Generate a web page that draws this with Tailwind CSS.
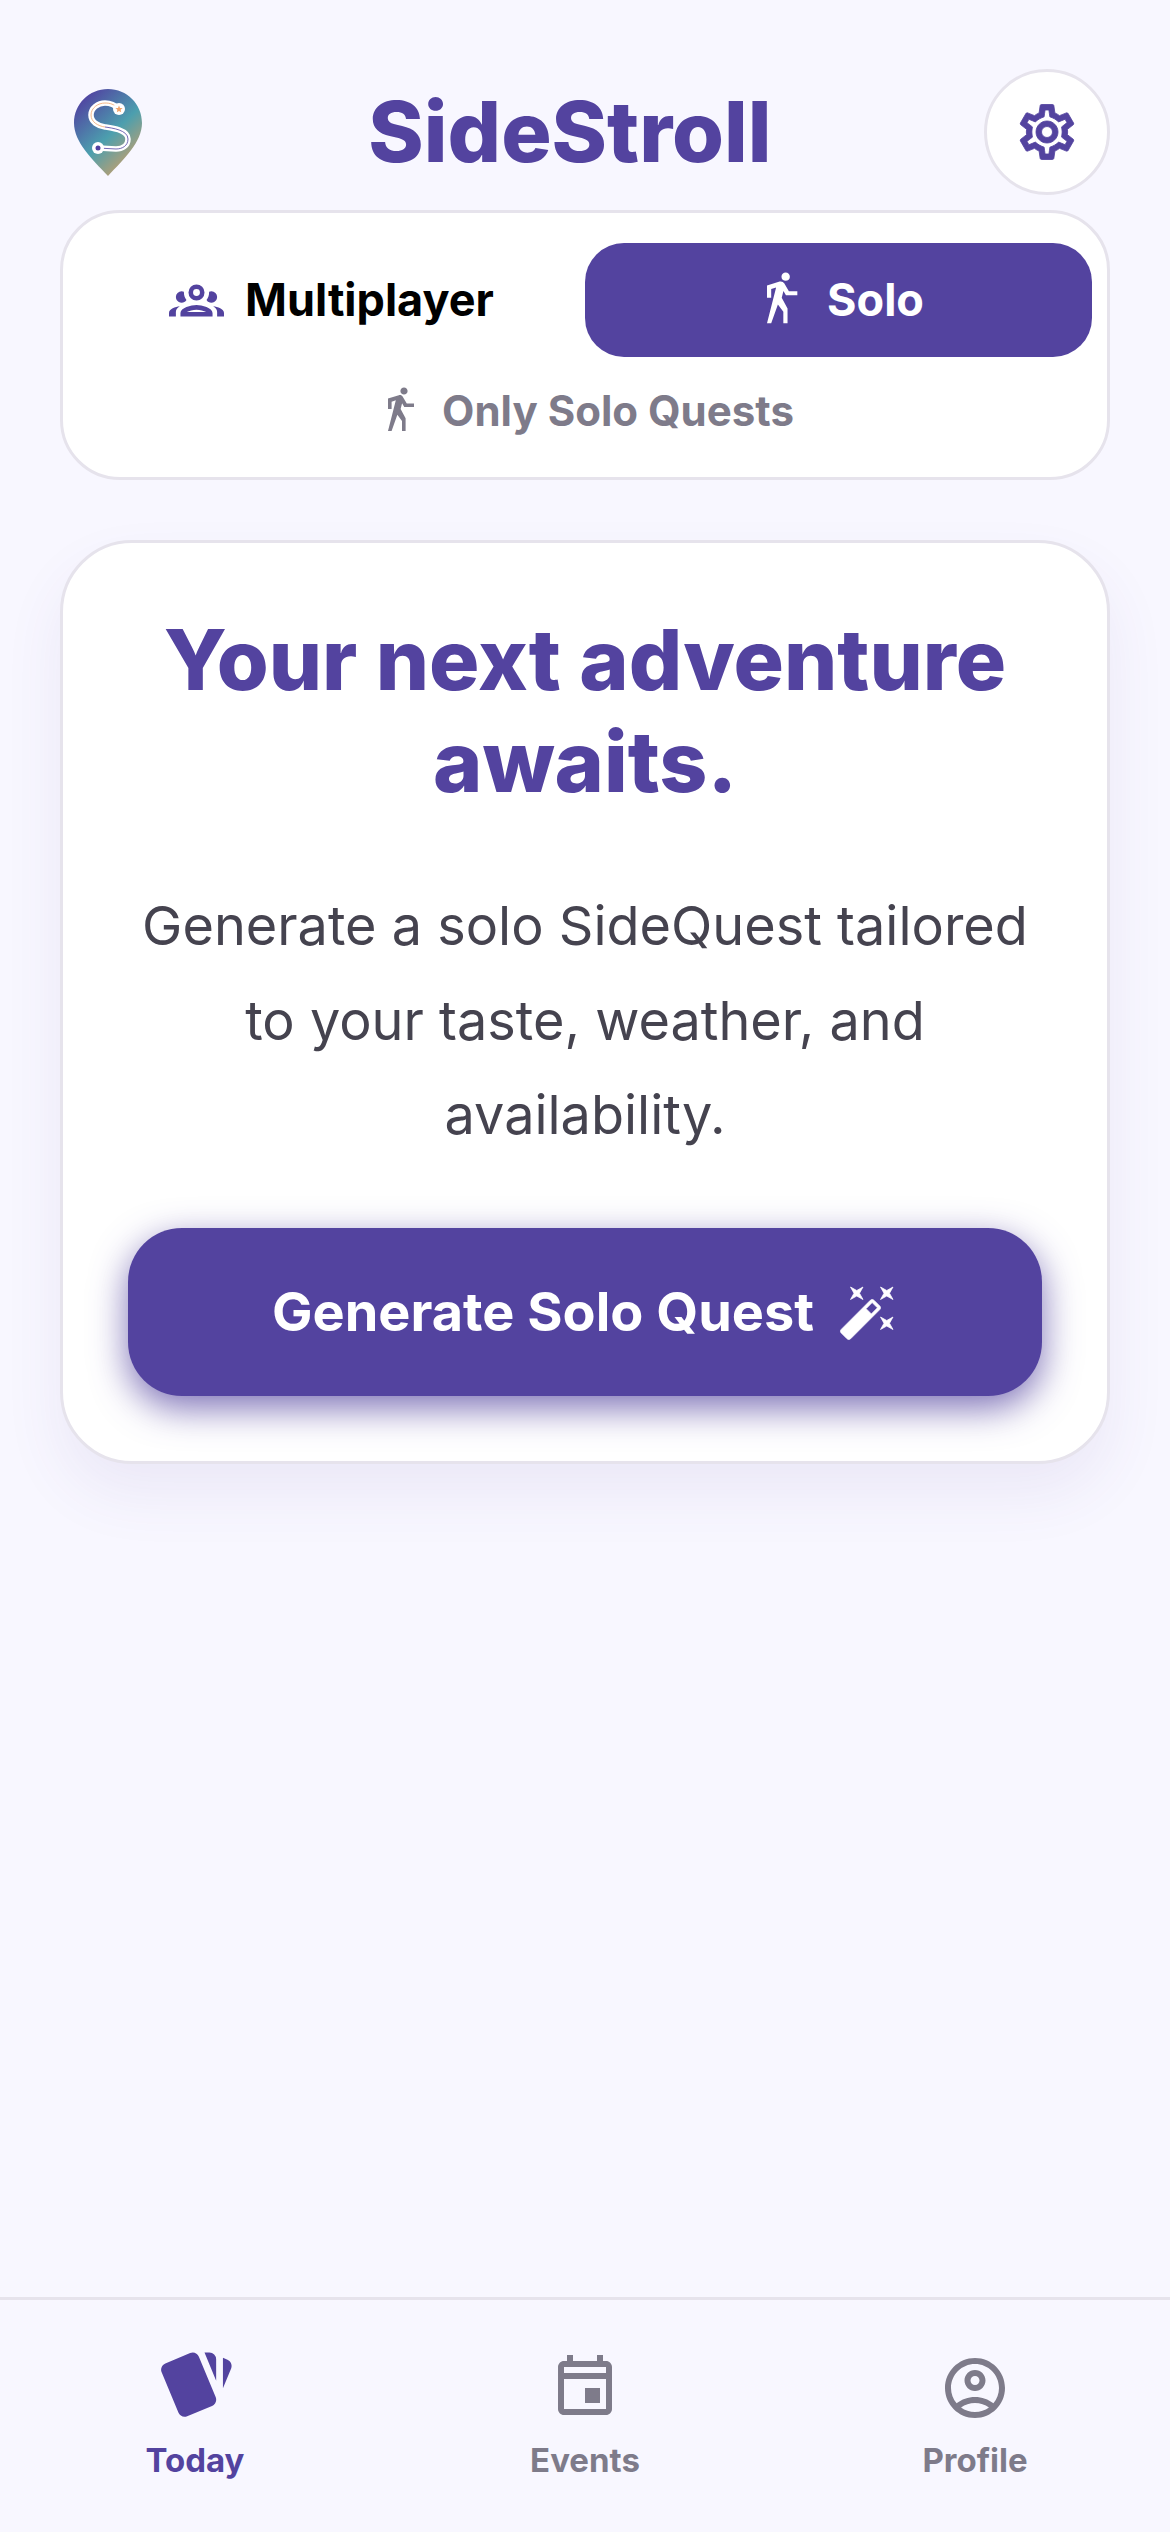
<!DOCTYPE html>
<html lang="en">
<head>
    <meta charset="UTF-8">
    <meta name="viewport" content="width=device-width, initial-scale=1.0">
    <title>SideStroll</title>
    <script src="https://cdn.jsdelivr.net/npm/@tailwindcss/browser@4"></script>
</head>
<body class="bg-[#f8f7ff] font-[Inter,sans-serif]">
    <div class="h-[2532px] flex flex-col overflow-hidden">
        <main class="flex-1 px-[60px] pt-[69px]">
            <!-- header -->
            <div class="flex items-center justify-between h-[126px]">
                <div class="w-[96px] flex justify-center">
                    <svg class="w-[68px] h-[87px]" viewBox="0 0 68 87">
                        <defs>
                            <linearGradient id="pin" x1="0.15" y1="0.05" x2="0.8" y2="0.95">
                                <stop offset="0" stop-color="#5140a1"/>
                                <stop offset="0.55" stop-color="#4c9fae"/>
                                <stop offset="1" stop-color="#cc9f68"/>
                            </linearGradient>
                        </defs>
                        <path d="M34 0C15 0 0 15 0 34C0 53 18 70 34 87C50 70 68 53 68 34C68 15 53 0 34 0Z" fill="url(#pin)"/>
                        <path d="M45 20C40 15 36 14 31 14C24 14 17 19 17 26C17 33 24 37 31 38C38 39 54 41 54 50C54 57 48 60 42 60L24 59" fill="none" stroke="#fff" stroke-width="5.5" stroke-linecap="round"/>
                        <path d="M45 20C40 15 36 14 31 14C24 14 17 19 17 26C17 33 24 37 31 38" fill="none" stroke="#f2a46a" stroke-width="0.8"/>
                        <path d="M31 38C38 39 54 41 54 50C54 57 48 60 42 60L24 59" fill="none" stroke="#5140a1" stroke-width="0.8"/>
                        <circle cx="45" cy="20" r="6" fill="#fff"/>
                        <circle cx="24" cy="59" r="6" fill="#fff"/>
                        <path d="M45 16.5l1 2.400 2.600.2-2 1.700.6 2.500-2.200-1.300-2.200 1.300.6-2.500-2-1.700 2.600-.2z" fill="#f2a46a"/>
                        <circle cx="24" cy="59" r="2.500" fill="#5140a1"/>
                    </svg>
                </div>
                <h1 class="text-[84px] leading-[100px] font-extrabold text-[#53439f]">SideStroll</h1>
                <button class="w-[126px] h-[126px] rounded-full bg-white border-[3px] border-[#e6e3ec] flex items-center justify-center">
                    <svg class="w-[66px] h-[66px] text-[#53439f]" viewBox="0 0 24 24" fill="currentColor" stroke="currentColor" stroke-width="0.3">
                        <path d="M19.43 12.98c.04-.32.07-.64.07-.98 0-.34-.03-.66-.07-.98l2.11-1.65c.19-.15.24-.42.12-.64l-2-3.460c-.09-.16-.26-.25-.44-.25-.06 0-.12.01-.17.03l-2.490 1c-.52-.4-1.080-.73-1.690-.98l-.38-2.650C14.460 2.180 14.250 2 14 2h-4c-.25 0-.46.18-.49.42l-.38 2.650c-.61.25-1.170.59-1.690.98l-2.490-1c-.06-.02-.12-.03-.18-.03-.17 0-.34.09-.43.25l-2 3.460c-.13.22-.07.49.12.64l2.110 1.650c-.04.32-.07.65-.07.98 0 .33.03.66.07.98l-2.110 1.650c-.19.15-.24.42-.12.64l2 3.460c.09.16.26.25.44.25.06 0 .12-.01.17-.03l2.490-1c.52.4 1.080.73 1.690.98l.38 2.650c.03.24.24.42.49.42h4c.25 0 .46-.18.49-.42l.38-2.650c.61-.25 1.170-.59 1.690-.98l2.490 1c.06.02.12.03.18.03.17 0 .34-.09.43-.25l2-3.460c.12-.22.07-.49-.12-.64l-2.110-1.650zm-1.980-1.710c.04.31.05.52.05.73 0 .21-.02.43-.05.73l-.14 1.130.89.7 1.080.84-.7 1.210-1.270-.51-1.040-.42-.9.68c-.43.32-.84.56-1.250.73l-1.060.43-.16 1.130-.2 1.350h-1.400l-.19-1.350-.16-1.130-1.060-.43c-.43-.18-.83-.41-1.230-.71l-.91-.7-1.060.43-1.270.51-.7-1.210 1.080-.84.89-.7-.14-1.130c-.03-.31-.05-.54-.05-.74s.02-.43.05-.73l.14-1.130-.89-.7-1.080-.84.7-1.210 1.270.51 1.040.42.9-.68c.43-.32.84-.56 1.250-.73l1.060-.43.16-1.130.2-1.350h1.390l.19 1.350.16 1.130 1.060.43c.43.18.83.41 1.230.71l.91.7 1.060-.43 1.270-.51.7 1.210-1.070.85-.89.7.14 1.130zM12 8c-2.210 0-4 1.790-4 4s1.790 4 4 4 4-1.790 4-4-1.790-4-4-4zm0 6c-1.100 0-2-.9-2-2s.9-2 2-2 2 .9 2 2-.9 2-2 2z"/>
                    </svg>
                </button>
            </div>

            <!-- mode switch -->
            <section class="mt-[15px] h-[270px] bg-white border-[3px] border-[#e6e3ec] rounded-[60px] px-[15px] pt-[30px]">
                <div class="flex">
                    <button class="flex-1 h-[114px] rounded-[39px] flex items-center justify-center gap-[21px] text-[45px] font-bold text-black">
                        <svg class="w-[55px] h-[55px] text-[#53439f]" viewBox="0 0 24 24" fill="currentColor">
                            <path d="M12,5A3.500,3.500 0 0,0 8.500,8.500A3.500,3.500 0 0,0 12,12A3.500,3.500 0 0,0 15.500,8.500A3.500,3.500 0 0,0 12,5M12,7A1.500,1.500 0 0,1 13.500,8.500A1.500,1.500 0 0,1 12,10A1.500,1.500 0 0,1 10.500,8.500A1.500,1.500 0 0,1 12,7M5.500,8A2.500,2.500 0 0,0 3,10.500C3,11.440 3.530,12.250 4.290,12.680C4.650,12.880 5.060,13 5.500,13C5.940,13 6.350,12.880 6.710,12.680C7.080,12.470 7.390,12.170 7.620,11.810C6.890,10.860 6.500,9.700 6.500,8.500C6.500,8.410 6.500,8.310 6.500,8.220C6.200,8.080 5.860,8 5.500,8M18.500,8C18.140,8 17.800,8.080 17.500,8.220C17.500,8.310 17.500,8.410 17.500,8.500C17.500,9.700 17.110,10.860 16.380,11.810C16.500,12 16.630,12.150 16.780,12.300C16.940,12.450 17.100,12.580 17.290,12.680C17.650,12.880 18.060,13 18.500,13C18.940,13 19.350,12.880 19.710,12.680C20.470,12.250 21,11.440 21,10.500A2.500,2.500 0 0,0 18.500,8M12,14C9.660,14 5,15.170 5,17.500V19H19V17.500C19,15.170 14.340,14 12,14M4.710,14.550C2.780,14.780 0,15.760 0,17.500V19H3V17.070C3,16.060 3.690,15.220 4.710,14.550M19.290,14.550C20.310,15.220 21,16.060 21,17.070V19H24V17.500C24,15.760 21.220,14.780 19.290,14.550M12,16C13.530,16 15.240,16.500 16.230,17H7.770C8.760,16.500 10.470,16 12,16Z"/>
                        </svg>
                        Multiplayer
                    </button>
                    <button class="flex-1 h-[114px] rounded-[39px] bg-[#53439f] flex items-center justify-center gap-[18px] text-[45px] font-bold text-white">
                        <svg class="w-[56px] h-[56px]" viewBox="0 0 24 24" fill="currentColor">
                            <path d="M14.120,10H19V8.200H15.380L13.380,4.870C13.080,4.370 12.540,4.030 11.920,4.030C11.740,4.030 11.580,4.060 11.420,4.110L6,5.800V11H7.800V7.330L9.910,6.670L6,22H7.800L10.670,13.890L13,17V22H14.800V15.590L12.310,11.050L13.040,8.180M14,3.800C15,3.800 15.800,3 15.800,2C15.800,1 15,0.200 14,0.200C13,0.200 12.200,1 12.200,2C12.200,3 13,3.800 14,3.800Z"/>
                        </svg>
                        Solo
                    </button>
                </div>
                <div class="mt-[24px] flex items-center justify-center gap-[18px] text-[42px] leading-[60px] font-bold text-[#7e7b8a]">
                    <svg class="w-[48px] h-[48px]" viewBox="0 0 24 24" fill="currentColor">
                        <path d="M14.120,10H19V8.200H15.380L13.380,4.870C13.080,4.370 12.540,4.030 11.920,4.030C11.740,4.030 11.580,4.060 11.420,4.110L6,5.800V11H7.800V7.330L9.910,6.670L6,22H7.800L10.670,13.890L13,17V22H14.800V15.590L12.310,11.050L13.040,8.180M14,3.800C15,3.800 15.800,3 15.800,2C15.800,1 15,0.200 14,0.200C13,0.200 12.200,1 12.200,2C12.200,3 13,3.800 14,3.800Z"/>
                    </svg>
                    Only Solo Quests
                </div>
            </section>

            <!-- generate card -->
            <section class="mt-[60px] h-[924px] bg-white border-[3px] border-[#e6e3ec] rounded-[72px] px-[65px] pt-[66px] shadow-[0_30px_60px_rgba(83,67,159,0.08)]">
                <h2 class="text-[84px] leading-[102px] font-extrabold text-[#53439f] text-center">Your next adventure awaits.</h2>
                <p class="mt-[66px] text-[54px] leading-[94.500px] text-[#45434f] text-center">Generate a solo SideQuest tailored to your taste, weather, and availability.</p>
                <button class="mt-[65px] w-full h-[168px] rounded-[54px] bg-[#53439f] flex items-center justify-center gap-[24px] text-[54px] font-bold text-white shadow-[0_12px_36px_rgba(83,67,159,0.75)]">
                    Generate Solo Quest
                    <svg class="w-[60px] h-[60px]" viewBox="0 0 24 24" fill="currentColor" stroke="currentColor" stroke-width="0.3">
                        <path d="M7.500,5.600L5,7L6.400,4.500L5,2L7.500,3.400L10,2L8.600,4.500L10,7L7.500,5.600M19.500,15.400L22,14L20.600,16.500L22,19L19.500,17.600L17,19L18.400,16.500L17,14L19.500,15.400M22,2L20.600,4.500L22,7L19.500,5.600L17,7L18.400,4.500L17,2L19.500,3.400L22,2M13.340,12.780L15.780,10.340L13.660,8.220L11.220,10.660L13.340,12.780M14.370,7.290L16.710,9.630C17.100,10 17.100,10.650 16.710,11.040L5.040,22.710C4.650,23.100 4,23.100 3.630,22.710L1.290,20.370C0.900,20 0.900,19.350 1.290,18.960L12.960,7.290C13.350,6.900 14,6.900 14.370,7.290Z"/>
                    </svg>
                </button>
            </section>
        </main>

        <!-- bottom nav -->
        <nav class="h-[235px] border-t-[3px] border-[#e6e3ec] grid grid-cols-3 pt-[49px]">
            <a class="flex flex-col items-center text-[#53439f]">
                <svg class="w-[81px] h-[81px] -mt-[4px]" viewBox="0 0 24 24" fill="currentColor">
                    <path d="M21.470,4.350L20.130,3.790V12.820L22.560,6.960C22.970,5.940 22.500,4.770 21.470,4.350M1.970,8.050L6.930,20C7.240,20.770 7.970,21.240 8.740,21.260C9,21.260 9.270,21.210 9.530,21.100L16.900,18.050C17.650,17.740 18.110,17 18.130,16.260C18.140,16 18.090,15.710 18,15.450L13,3.500C12.710,2.730 11.970,2.260 11.190,2.250C10.930,2.250 10.670,2.310 10.420,2.400L3.060,5.450C2.040,5.870 1.550,7.040 1.970,8.050M18.120,4.250A2,2 0 0,0 16.120,2.250H14.670L18.120,10.590"/>
                </svg>
                <span class="mt-[12px] text-[33px] leading-[44px] font-bold">Today</span>
            </a>
            <a class="flex flex-col items-center text-[#7e7b8a]">
                <svg class="w-[72px] h-[80px] pb-[8px]" viewBox="0 0 24 24" fill="currentColor">
                    <path d="M19 4h-1V2h-2v2H8V2H6v2H5c-1.110 0-1.990.9-1.990 2L3 20c0 1.100.89 2 2 2h14c1.100 0 2-.9 2-2V6c0-1.100-.9-2-2-2zm0 16H5V10h14v10zm0-12H5V6h14v2zm-2 5h-5v5h5v-5z"/>
                </svg>
                <span class="mt-[9px] text-[33px] leading-[44px] font-bold">Events</span>
            </a>
            <a class="flex flex-col items-center text-[#7e7b8a]">
                <svg class="w-[72px] h-[80px] pt-[3px] pb-[5px]" viewBox="0 0 24 24" fill="currentColor">
                    <path d="M12 2C6.480 2 2 6.480 2 12s4.480 10 10 10 10-4.480 10-10S17.520 2 12 2zM7.350 18.500C8.660 17.560 10.260 17 12 17s3.340.56 4.650 1.500c-1.310.94-2.910 1.500-4.650 1.500s-3.340-.56-4.650-1.500zm10.790-1.380C16.450 15.800 14.320 15 12 15s-4.450.8-6.140 2.120C4.700 15.730 4 13.950 4 12c0-4.420 3.580-8 8-8s8 3.580 8 8c0 1.950-.7 3.730-1.860 5.120zM12 6c-1.930 0-3.500 1.570-3.500 3.500S10.070 13 12 13s3.500-1.570 3.500-3.500S13.930 6 12 6zm0 5c-.83 0-1.500-.67-1.500-1.500S11.170 8 12 8s1.500.67 1.500 1.500S12.830 11 12 11z"/>
                </svg>
                <span class="mt-[9px] text-[33px] leading-[44px] font-bold">Profile</span>
            </a>
        </nav>
    </div>
</body>
</html>
